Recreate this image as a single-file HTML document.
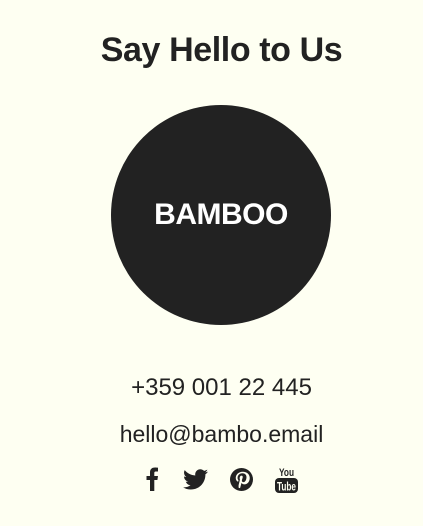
<!DOCTYPE html>
<html><head><meta charset="utf-8"><style>
html,body{margin:0;padding:0;background:#fefff2;width:423px;height:526px;overflow:hidden;font-family:"Liberation Sans",sans-serif;color:#222;}
h1{position:absolute;top:31px;left:20px;width:403px;text-align:center;margin:0;font-size:34px;font-weight:bold;letter-spacing:-0.4px;}
.c{position:absolute;left:111px;top:105px;width:220px;height:220px;border-radius:50%;background:#222;color:#fff;font-weight:bold;font-size:30px;text-align:center;line-height:220px;letter-spacing:-0.5px;}
.t{position:absolute;left:20px;width:403px;text-align:center;font-size:23px;}
svg{position:absolute;}
</style></head><body>
<h1>Say Hello to Us</h1>
<div class="c">BAMBOO</div>
<div class="t" style="top:374px;font-size:24px">+359 001 22 445</div>
<div class="t" style="top:421px">hello@bambo.email</div>
<svg style="left:146px;top:467px" width="13" height="24" viewBox="0 0 13 24"><path d="M4 24V13H0.5V9H4V5.5C4 2 6 0.5 9 0.5 10.5 0.5 12 0.7 12 0.7V4.5H10C8.5 4.5 8.3 5.2 8.3 6.2V9H12L11.4 13H8.3V24Z" fill="#222"/></svg>
<svg style="left:183px;top:469px" width="25" height="21" viewBox="0 0 24 20"><path d="M24 2.4c-.9.4-1.8.6-2.8.8 1-.6 1.8-1.6 2.2-2.7-1 .6-2 1-3.1 1.2C19.3.7 18 .1 16.6.1c-2.7 0-4.900 2.2-4.900 4.900 0 .4 0 .8.1 1.100C7.7 5.9 4.1 4 1.7 1 1.2 1.8 1 2.6 1 3.5c0 1.7.9 3.2 2.2 4.1-.8 0-1.6-.2-2.2-.6v.1c0 2.4 1.7 4.4 3.9 4.8-.4.1-.8.2-1.3.2-.3 0-.6 0-.9-.1.6 2 2.4 3.4 4.6 3.4-1.7 1.3-3.8 2.1-6.1 2.1-.4 0-.8 0-1.2-.1 2.2 1.4 4.8 2.2 7.5 2.2 9.1 0 14-7.5 14-14v-.6c1-.7 1.8-1.6 2.5-2.6z" fill="#222"/></svg>
<svg style="left:230px;top:468px" width="23" height="23" viewBox="0 0 24 24"><circle cx="12" cy="12" r="12" fill="#222"/><path d="M10.5 21 12 15.5c.6 1 1.8 1.6 3 1.6 3.4 0 5.6-3 5.6-6.8 0-3.6-3-6.4-7.2-6.4-5 0-7.4 3.5-7.4 6.4 0 1.8.7 3.300 2.1 3.9.2.1.5 0 .5-.3l.2-.9c.1-.3 0-.4-.2-.6-.4-.5-.7-1.100-.7-2 0-2.6 1.9-4.9 5-4.9 2.7 0 4.3 1.7 4.3 3.9 0 2.9-1.3 5.4-3.2 5.4-1 0-1.8-.9-1.6-1.9.3-1.3.9-2.6.9-3.5 0-.8-.4-1.5-1.3-1.5-1.100 0-1.9 1.100-1.9 2.6 0 .9.3 1.6.3 1.6l-1.3 5.3c-.3 1.2-.1 2.7 0 3.4z" fill="#fefff2"/></svg>
<svg style="left:275px;top:466px" width="23" height="27" viewBox="0 0 23 27"><text x="4" y="10" font-family="Liberation Sans,sans-serif" font-weight="bold" font-size="11" fill="#222" textLength="15" lengthAdjust="spacingAndGlyphs">You</text><rect x="0" y="12" width="23" height="15" rx="4" fill="#222"/><text x="2" y="24.5" font-family="Liberation Sans,sans-serif" font-weight="bold" font-size="12" fill="#fefff2" textLength="19" lengthAdjust="spacingAndGlyphs">Tube</text></svg>
</body></html>
